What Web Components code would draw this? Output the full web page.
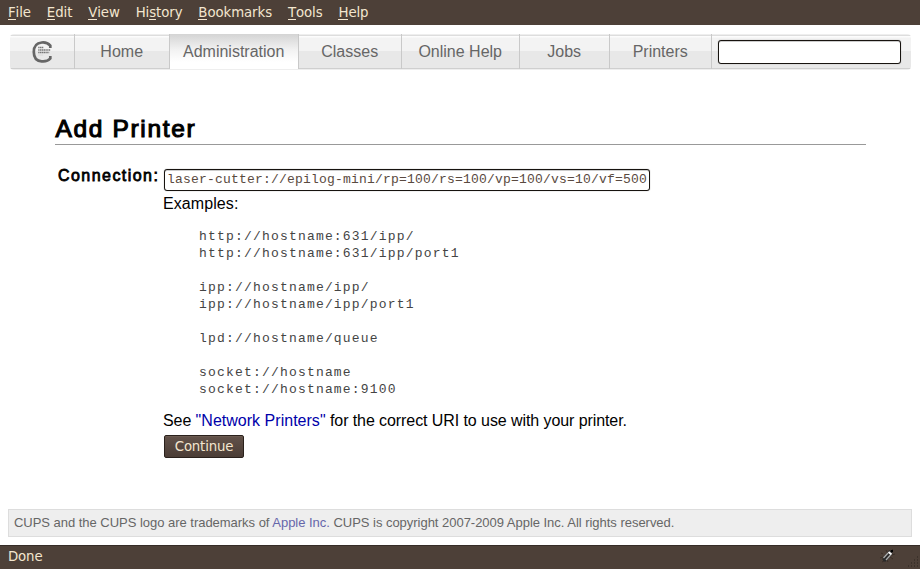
<!DOCTYPE html>
<html lang="en">
<head>
<meta charset="utf-8">
<title>Add Printer - CUPS</title>
<style>
html, body { margin: 0; height: 100%; background: #fff; overflow: hidden; }
</style>
</head>
<body>
<cups-window></cups-window>
<script>
function define(name, html) {
  const t = document.createElement('template');
  t.innerHTML = html;
  customElements.define(name, class extends HTMLElement {
    constructor() {
      super();
      this.attachShadow({ mode: 'open' }).append(t.content.cloneNode(true));
    }
  });
}

define('menu-bar', `
<style>
:host { display: flex; gap: 15.9px; height: 25px; box-sizing: border-box; padding-left: 8px; background: #4d4038; color: #f3e6cf; font: 13.33px/25px "DejaVu Sans", sans-serif; letter-spacing: -.09px; }
u { text-decoration: none; box-shadow: inset 0 -1px #f3e6cf; display: inline-block; line-height: 14px; height: 14px; }
</style>
<span><u>F</u>ile</span><span><u>E</u>dit</span><span><u>V</u>iew</span><span>Hi<u>s</u>tory</span><span><u>B</u>ookmarks</span><span><u>T</u>ools</span><span><u>H</u>elp</span>`);

define('nav-tab', `
<style>
:host { display: flex; align-items: center; justify-content: center; box-sizing: border-box; height: 35px; padding-right: .6px; border-right: 1px solid #c9c9c9; color: #666; font: 16px/18px "Liberation Sans", Arial, sans-serif; }
:host([active]) { background: linear-gradient(#d4d4d4, #f2f2f2 45%, #fff 80%); }
</style>
<slot></slot>`);

define('cups-logo', `
<style>:host { display: block; width: 20px; height: 22px; } svg { display: block; }</style>
<svg width="20" height="22" viewBox="0 0 20 22">
<path d="M18.300 7 V4.600 C16 2 12.500 1.200 9.800 1.500 C4.300 2 1.800 6 1.800 11 C1.800 16.500 4.500 20 9.600 20.400 C13 20.700 16.500 19.800 18.300 17.500 V15" fill="none" stroke="#666" stroke-width="2.700"/>
<path d="M6.200 6.500h5.500M6.200 9h12M6.200 11.600h11" stroke="#777" stroke-width="1.500" stroke-dasharray="1.400 .4"/>
<path d="M6.200 14h5" stroke="#ccc" stroke-width=".6"/>
</svg>`);

define('search-box', `
<style>
:host { display: block; width: 183px; height: 24px; box-sizing: border-box; border: 1px solid #17130f; border-radius: 3px; background: #fff; box-shadow: 0 0 1px #777, inset 0 1px #ccc; }
</style>`);

define('nav-bar', `
<style>
:host { display: grid; grid-template-columns: 65px 95px 129px 103px 118px 90px 102px 1fr; margin: 9px 9px 0 10px; height: 36px; box-sizing: border-box; border-bottom: 1px solid transparent; border-radius: 4px; background: linear-gradient(#eee 0 1px, #ddd 1px 2px, #fcfcfc 2px 3px, #f3f3f3 4px 17px, #e8e8e8 17px 34px, #cfcfcf 34px 35px, transparent 35px); }
search-box { margin: 6px 0 0 6px; }
</style>
<nav-tab><cups-logo></cups-logo></nav-tab>
<nav-tab>Home</nav-tab>
<nav-tab active>Administration</nav-tab>
<nav-tab>Classes</nav-tab>
<nav-tab>Online Help</nav-tab>
<nav-tab>Jobs</nav-tab>
<nav-tab>Printers</nav-tab>
<search-box></search-box>`);

define('uri-field', `
<style>
:host { display: block; width: 486px; height: 22px; box-sizing: border-box; border: 1px solid #17130f; border-radius: 3px; padding-left: 2px; background: #fff; color: #5a4a40; box-shadow: 0 0 1px #777, inset 0 1px #ccc; white-space: nowrap; font: 13px/20px "Liberation Mono", monospace; letter-spacing: .2px; }
</style>
<slot></slot>`);

define('push-button', `
<style>
:host { display: block; width: 80px; height: 23px; box-sizing: border-box; border: 1px solid #2a211c; border-radius: 2px; background: linear-gradient(#62524a, #4b3d36); color: #f3e6cf; text-align: center; font: 13.33px/21px "DejaVu Sans", sans-serif; letter-spacing: -.18px; box-shadow: inset 0 1px #6b5b51; }
</style>
<slot></slot>`);

define('printer-form', `
<style>
:host { display: block; padding: 0 54px 0 55px; margin-top: 46px; font: 16px/20px "Liberation Sans", Arial, sans-serif; color: #000; }
h1 { margin: 0; height: 28px; border-bottom: 1px solid #999; font-size: 24.5px; font-weight: 400; -webkit-text-stroke: 1.1px #000; line-height: 26px; letter-spacing: 1.65px; text-indent: .5px; }
.form { display: grid; grid-template-columns: 105px 1fr; column-gap: 3px; padding-top: 24px; }
label { padding-left: 3px; -webkit-text-stroke: .8px #000; letter-spacing: 1.45px; line-height: 14px; }
uri-field { margin-left: 1px; }
.ex { padding-top: 3px; line-height: 20px; letter-spacing: .08px; }
pre { margin: 14px 0 13px 36px; font: 13px/17px "Liberation Mono", monospace; letter-spacing: 1.19px; color: #444; }
.see { letter-spacing: -.08px; }
a { color: #00a; letter-spacing: .02px; }
push-button { margin: 4px 0 0 1px; }
</style>
<h1>Add Printer</h1>
<div class="form"><label>Connection:</label><div>
<uri-field>laser-cutter://epilog-mini/rp=100/rs=100/vp=100/vs=10/vf=500</uri-field>
<div class="ex">Examples:</div>
<pre>http://hostname:631/ipp/
http://hostname:631/ipp/port1

ipp://hostname/ipp/
ipp://hostname/ipp/port1

lpd://hostname/queue

socket://hostname
socket://hostname:9100</pre>
<div class="see">See <a>"Network Printers"</a> for the correct URI to use with your printer.</div>
<push-button>Continue</push-button>
</div></div>`);

define('page-footer', `
<style>
:host { display: block; margin: auto 8px 8px; height: 28px; box-sizing: border-box; border: 1px solid #ddd; background: #eee; padding-left: 5px; color: #666; white-space: nowrap; font: 13px/26px "Liberation Sans", Arial, sans-serif; letter-spacing: -.027px; }
a { color: #66a; }
</style>
<span>CUPS and the CUPS logo are trademarks of <a>Apple Inc.</a> CUPS is copyright 2007-2009 Apple Inc. All rights reserved.</span>`);

define('status-bar', `
<style>
:host { display: flex; justify-content: space-between; height: 24px; box-sizing: border-box; border-top: 1px solid #352c27; padding-left: 8px; background: #4d4038; color: #f3e6cf; font: 13.33px/21px "DejaVu Sans", sans-serif; letter-spacing: -.15px; }
</style>
<span>Done</span>
<svg width="42" height="23" viewBox="878 546 42 23">
<path d="M881 553l2 1M880 558l3-1M882 562l2-1M886 550l1 2M895 554l-3 1M893 559l-3-2M888 562l-1-2M893 549l-2 2" stroke="#30261f" stroke-width=".7"/>
<path d="M890 553L885 559" stroke="#292929" stroke-width="5" stroke-linecap="round"/>
<path d="M888 553L883.500 558M890.500 555L886 560" stroke="#aaa" stroke-width="1.300"/>
<path d="M888.500 552L891.500 554.500" stroke="#fff" stroke-width="2"/>
<path d="M891 550h2v2h-2z" fill="#000"/>
<path d="M917 557h1M914 560h1M917 560h1M911 563h1M914 563h1M917 563h1M908 566h1M911 566h1M914 566h1M917 566h1" stroke="#2c241f"/>
</svg>`);

define('cups-window', `
<style>:host { display: flex; flex-direction: column; height: 569px; width: 920px; }</style>
<menu-bar></menu-bar>
<nav-bar></nav-bar>
<printer-form></printer-form>
<page-footer></page-footer>
<status-bar></status-bar>`);
</script>
</body>
</html>
